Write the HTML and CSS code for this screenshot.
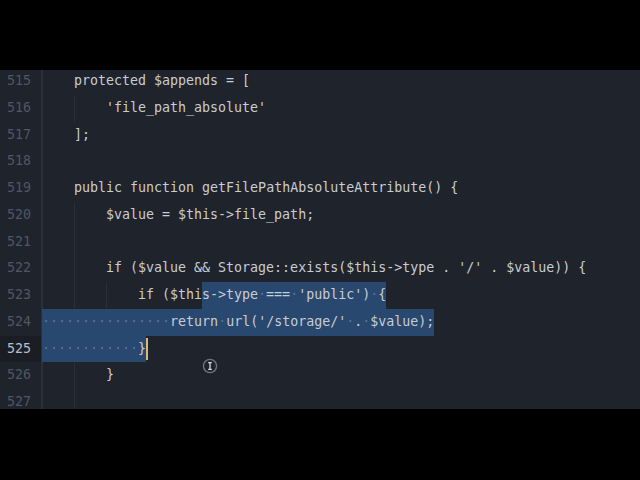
FILE: index.html
```html
<!DOCTYPE html>
<html>
<head>
<meta charset="utf-8">
<link rel="stylesheet" href="styles.css">
</head>
<body>
<div class="frame">
  <div class="editor">
    <div class="inner">
      <div class="gutter">
        <div class="num">515</div>
        <div class="num">516</div>
        <div class="num">517</div>
        <div class="num">518</div>
        <div class="num">519</div>
        <div class="num">520</div>
        <div class="num">521</div>
        <div class="num">522</div>
        <div class="num">523</div>
        <div class="num">524</div>
        <div class="num active">525</div>
        <div class="num">526</div>
        <div class="num">527</div>
      </div>
      <div class="code">
        <div class="line"><span class="ind">    </span>protected $appends = [</div>
        <div class="line"><span class="ind">    </span><span class="ind">    </span>'file_path_absolute'</div>
        <div class="line"><span class="ind">    </span>];</div>
        <div class="line"><span class="ind">    </span></div>
        <div class="line"><span class="ind">    </span>public function getFilePathAbsoluteAttribute() {</div>
        <div class="line"><span class="ind">    </span><span class="ind">    </span>$value = $this-&gt;file_path;</div>
        <div class="line"><span class="ind">    </span><span class="ind">    </span></div>
        <div class="line"><span class="ind">    </span><span class="ind">    </span>if ($value &amp;&amp; Storage::exists($this-&gt;type . '/' . $value)) {</div>
        <div class="line"><span class="ind">    </span><span class="ind">    </span><span class="ind">    </span>if ($thi<span class="sel">s-&gt;type<span class="dot">·</span>===<span class="dot">·</span>'public')<span class="dot">·</span>{</span></div>
        <div class="line"><span class="sel"><span class="dot">················</span>return<span class="dot">·</span>url('/storage/'<span class="dot">·</span>.<span class="dot">·</span>$value);</span></div>
        <div class="line"><span class="sel"><span class="dot">············</span>}</span><span class="caret"></span></div>
        <div class="line"><span class="ind">    </span><span class="ind">    </span>}</div>
        <div class="line"><span class="ind">    </span><span class="ind">    </span></div>
      </div>
    </div>
    <div class="pointer">
      <svg width="16" height="16" viewBox="0 0 16 16">
        <circle cx="8" cy="8" r="6.6" fill="none" stroke="#6f757f" stroke-width="1.4"/>
        <path d="M6.2 4.6h3.6M6.2 11.4h3.6M8 4.6v6.8" stroke="#d6d9de" stroke-width="1.3" fill="none"/>
      </svg>
    </div>
  </div>
</div>
</body>
</html>
```

FILE: styles.css
```css
html, body {
  margin: 0;
  padding: 0;
  background: #000;
}

.frame {
  width: 640px;
  height: 480px;
  display: flex;
  flex-direction: column;
  justify-content: flex-start;
  padding-top: 70px;
  box-sizing: border-box;
}

.editor {
  position: relative;
  height: 339px;
  background: #1f232b;
  overflow: hidden;
}

.inner {
  display: flex;
  margin-top: -2px;
  font-family: "DejaVu Sans Mono", monospace;
  font-size: 13.3px;
  line-height: 26.75px;
}

.gutter {
  width: 42px;
  flex: none;
  border-right: 1px solid #2a2f38;
  box-sizing: border-box;
}

.num {
  height: 26.75px;
  text-align: right;
  padding-right: 10px;
  color: #4f5664;
}

.num.active {
  background: #1a1d23;
  color: #b9bec7;
}

.code {
  flex: 1;
  color: #c8ccd3;
}

.line {
  height: 26.75px;
  white-space: pre;
}

.ind {
  display: inline-block;
  width: 32px;
  box-shadow: inset 1px 0 0 #2a2f38;
}

.sel {
  display: inline-block;
  background: #28486f;
  line-height: 26.75px;
  height: 26.75px;
  vertical-align: top;
}

.dot {
  color: #56729a;
}

.caret {
  display: inline-block;
  width: 0;
  height: 22px;
  border-left: 2px solid #d9b97a;
  vertical-align: middle;
  margin-right: -2px;
}

.pointer {
  position: absolute;
  left: 202px;
  top: 288px;
  width: 16px;
  height: 16px;
}
```
